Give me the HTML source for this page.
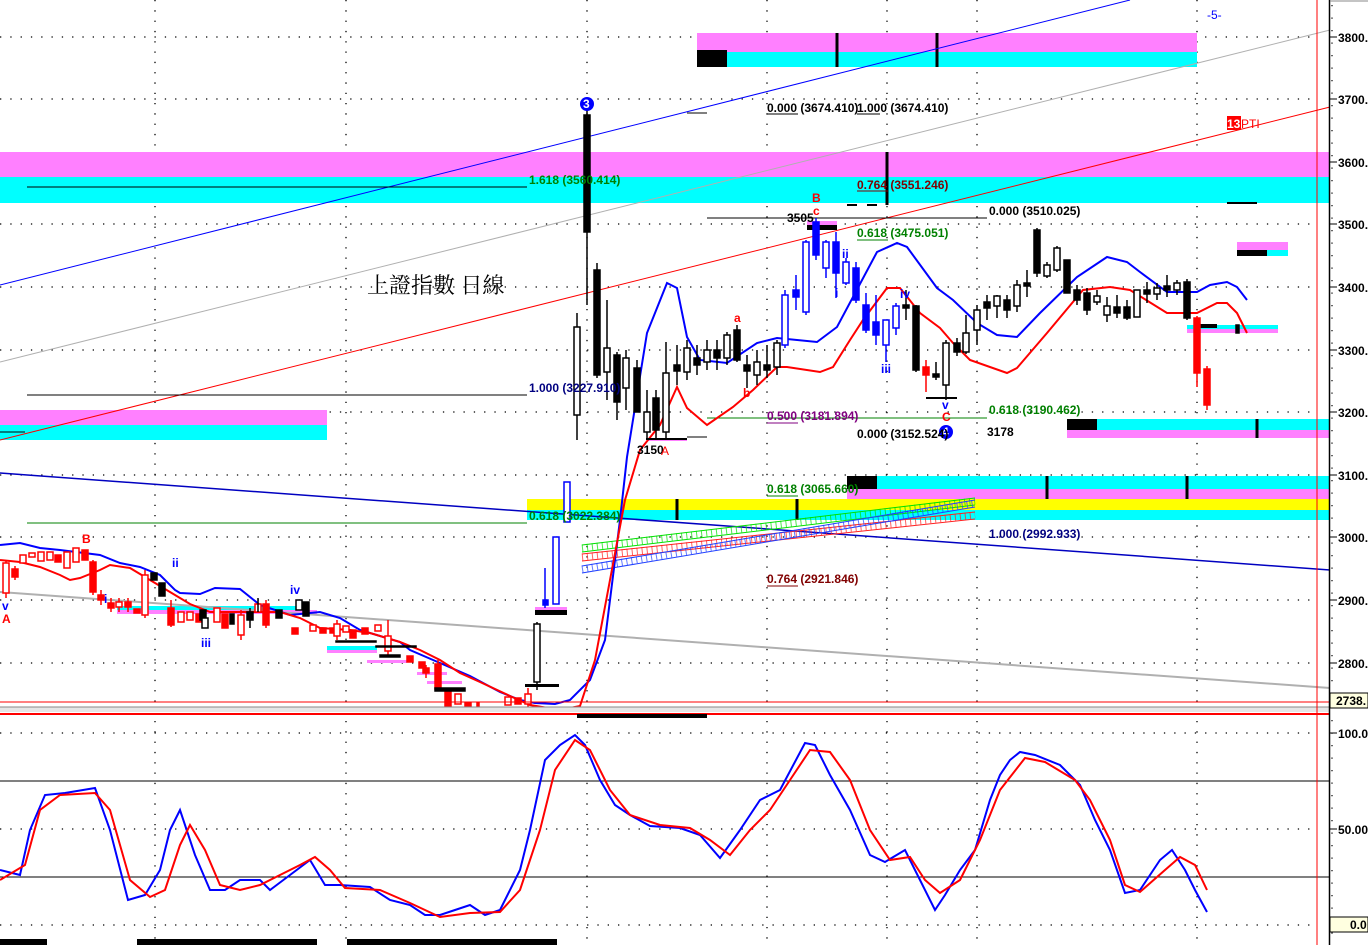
<!DOCTYPE html>
<html><head><meta charset="utf-8"><style>
html,body{margin:0;padding:0;background:#fff;width:1368px;height:945px;overflow:hidden}
svg{display:block}
text{font-family:"Liberation Sans",Arial,sans-serif;font-weight:bold;font-size:12px}
.ax{font-size:12px;fill:#000}
</style></head><body>
<svg width="1368" height="945" viewBox="0 0 1368 945" xmlns="http://www.w3.org/2000/svg">
<rect width="1368" height="945" fill="#fff"/>
<!-- dotted grid -->
<g stroke="#000" stroke-width="1.3" stroke-dasharray="1.3 9" fill="none">
<line x1="0" y1="37" x2="1316" y2="37"/><line x1="0" y1="99" x2="1316" y2="99"/>
<line x1="0" y1="162" x2="1316" y2="162"/><line x1="0" y1="224" x2="1316" y2="224"/>
<line x1="0" y1="287" x2="1316" y2="287"/><line x1="0" y1="350" x2="1316" y2="350"/>
<line x1="0" y1="412" x2="1316" y2="412"/><line x1="0" y1="475" x2="1316" y2="475"/>
<line x1="0" y1="537" x2="1316" y2="537"/><line x1="0" y1="600" x2="1316" y2="600"/>
<line x1="0" y1="663" x2="1316" y2="663"/>
<line x1="0" y1="733" x2="1316" y2="733"/><line x1="0" y1="829" x2="1316" y2="829"/>
<line x1="0" y1="925" x2="1316" y2="925"/>
<line x1="155" y1="0" x2="155" y2="945"/><line x1="346" y1="0" x2="346" y2="945"/>
<line x1="587" y1="0" x2="587" y2="945"/><line x1="767" y1="0" x2="767" y2="945"/>
<line x1="887" y1="0" x2="887" y2="945"/><line x1="977" y1="0" x2="977" y2="945"/>
<line x1="1197" y1="0" x2="1197" y2="945"/>
</g>
<!-- bands -->
<rect x="0" y="152" width="1330" height="25" fill="#ff80ff"/>
<rect x="0" y="177" width="1330" height="26" fill="#00ffff"/>
<rect x="697" y="33" width="500" height="19" fill="#ff80ff"/>
<rect x="697" y="52" width="500" height="15" fill="#00ffff"/>
<rect x="697" y="50" width="30" height="17" fill="#000"/>
<line x1="837" y1="33" x2="837" y2="67" stroke="#000" stroke-width="3"/>
<line x1="937" y1="33" x2="937" y2="67" stroke="#000" stroke-width="3"/>
<rect x="0" y="410" width="327" height="15" fill="#ff80ff"/>
<rect x="0" y="425" width="327" height="15" fill="#00ffff"/>
<rect x="1067" y="419" width="263" height="11" fill="#00ffff"/>
<rect x="1067" y="430" width="263" height="8" fill="#ff80ff"/>
<rect x="1067" y="419" width="30" height="11" fill="#000"/>
<line x1="1257" y1="419" x2="1257" y2="438" stroke="#000" stroke-width="3"/>
<rect x="847" y="476" width="483" height="13" fill="#00ffff"/>
<rect x="847" y="489" width="483" height="10" fill="#ff80ff"/>
<rect x="847" y="476" width="30" height="13" fill="#000"/>
<line x1="1047" y1="476" x2="1047" y2="499" stroke="#000" stroke-width="3"/>
<line x1="1187" y1="476" x2="1187" y2="499" stroke="#000" stroke-width="3"/>
<rect x="527" y="499" width="803" height="11" fill="#ffff00"/>
<rect x="527" y="510" width="803" height="10" fill="#00ffff"/>
<line x1="677" y1="499" x2="677" y2="520" stroke="#000" stroke-width="3"/>
<line x1="797" y1="499" x2="797" y2="520" stroke="#000" stroke-width="3"/>
<rect x="1237" y="242" width="51" height="8" fill="#ff80ff"/>
<rect x="1237" y="250" width="51" height="6" fill="#00ffff"/>
<rect x="1237" y="250" width="30" height="6" fill="#000"/>
<rect x="1187" y="325" width="91" height="4" fill="#00ffff"/>
<rect x="1187" y="329" width="91" height="4" fill="#ff80ff"/>
<rect x="1197" y="324" width="20" height="4" fill="#000"/>
<rect x="117" y="606" width="180" height="4" fill="#00ffff"/>
<rect x="117" y="610" width="200" height="4" fill="#ff80ff"/>
<rect x="327" y="646" width="50" height="4" fill="#00ffff"/>
<rect x="327" y="650" width="50" height="3" fill="#ff80ff"/>
<rect x="367" y="660" width="40" height="3" fill="#ff80ff"/>
<rect x="417" y="672" width="30" height="3" fill="#ff80ff"/>
<rect x="427" y="681" width="35" height="3" fill="#ff80ff"/>
<rect x="535" y="607" width="32" height="3" fill="#ff80ff"/>
<rect x="535" y="610" width="32" height="5" fill="#000"/>
<rect x="525" y="684" width="34" height="3" fill="#000"/>
<rect x="807" y="221" width="30" height="4" fill="#ff80ff"/>
<rect x="807" y="225" width="30" height="5" fill="#000"/>
<rect x="647" y="438" width="40" height="3" fill="#ff80ff"/>
<!-- trend lines -->
<g fill="none" stroke-width="1">
<line x1="0" y1="285" x2="1130" y2="0" stroke="#0000ff"/>
<line x1="0" y1="362" x2="1330" y2="30" stroke="#b0b0b0"/>
<line x1="0" y1="440" x2="1330" y2="107" stroke="#ff0000"/>
<line x1="0" y1="473" x2="1330" y2="570" stroke="#0000c0" stroke-width="1.5"/>
<line x1="0" y1="592" x2="1330" y2="688" stroke="#b0b0b0" stroke-width="2"/>
<line x1="27" y1="187" x2="527" y2="187" stroke="#000"/>
<line x1="27" y1="395" x2="527" y2="395" stroke="#000"/>
<line x1="27" y1="523" x2="527" y2="523" stroke="#008000"/>
<line x1="707" y1="218" x2="987" y2="218" stroke="#000"/>
<line x1="707" y1="418" x2="987" y2="418" stroke="#008000"/>
<line x1="687" y1="113" x2="707" y2="113" stroke="#000"/>
<line x1="847" y1="205" x2="857" y2="205" stroke="#000" stroke-width="2"/>
<line x1="867" y1="205" x2="877" y2="205" stroke="#000" stroke-width="2"/>
<line x1="887" y1="152" x2="887" y2="205" stroke="#000" stroke-width="3"/>
<line x1="1227" y1="203" x2="1257" y2="203" stroke="#000" stroke-width="2"/>
<line x1="0" y1="432" x2="25" y2="432" stroke="#000"/>
<line x1="687" y1="437" x2="707" y2="437" stroke="#000"/>
</g>
<!-- crosshatch -->
<g fill="none" stroke-width="1">
<line x1="582" y1="545" x2="975" y2="498" stroke="#00e000"/><line x1="582" y1="552" x2="975" y2="505" stroke="#00e000"/>
<line x1="582" y1="548" x2="975" y2="501" stroke="#00e000" stroke-width="7" stroke-dasharray="1 4" opacity="0.7"/>
<line x1="582" y1="554" x2="975" y2="512" stroke="#ff2020"/><line x1="582" y1="561" x2="975" y2="519" stroke="#ff2020"/>
<line x1="582" y1="557" x2="975" y2="515" stroke="#ff2020" stroke-width="7" stroke-dasharray="1 4" opacity="0.7"/>
<line x1="582" y1="566" x2="975" y2="500" stroke="#2040ff"/><line x1="582" y1="573" x2="975" y2="507" stroke="#2040ff"/>
<line x1="582" y1="569" x2="975" y2="503" stroke="#2040ff" stroke-width="7" stroke-dasharray="1 4" opacity="0.7"/>
</g>
<!-- moving averages -->
<polyline fill="none" stroke="#0000ff" stroke-width="2" points="0,545 20,543 40,548 60,550 100,555 120,563 140,567 160,575 175,590 180,593 200,594 215,588 240,589 260,605 290,615 320,612 340,618 360,630 380,636 400,642 410,650 440,663 470,676 500,692 520,700 535,703 555,704 570,700 590,680 605,640 620,520 627,457 647,333 667,283 677,288 687,337 700,360 727,363 757,343 777,338 817,342 837,327 853,297 877,252 897,243 907,247 937,288 953,300 977,323 997,335 1017,337 1040,313 1077,277 1107,257 1127,262 1140,272 1167,292 1197,292 1210,285 1227,282 1237,287 1247,300"/>
<polyline fill="none" stroke="#ff0000" stroke-width="2" points="0,560 20,562 40,567 60,575 70,580 80,578 100,570 110,565 130,568 150,580 170,592 190,604 210,612 260,612 280,612 300,618 320,628 350,630 370,633 400,642 420,650 440,660 460,673 480,682 510,696 530,705 560,710 580,706 595,660 610,580 625,500 640,450 660,425 677,387 687,408 707,425 733,407 753,390 777,367 787,367 820,372 833,367 850,340 863,320 887,288 900,288 920,313 940,328 953,343 970,360 1007,373 1017,368 1047,333 1083,290 1110,287 1130,290 1167,313 1197,313 1217,303 1227,303 1237,313 1247,333"/>
<!-- candles -->
<g stroke-width="1.5">
<!-- left red -->
<g stroke="#ff0000" fill="#ff0000">
<line x1="6" y1="560" x2="6" y2="598"/><rect x="3" y="563" width="6" height="30" fill="#fff"/>
<line x1="15" y1="566" x2="15" y2="580"/><rect x="12" y="569" width="6" height="8"/>
<rect x="20" y="555" width="6" height="8" fill="#fff"/><rect x="29" y="553" width="6" height="4" fill="#fff"/>
<rect x="38" y="552" width="6" height="9" fill="#fff"/><rect x="47" y="552" width="6" height="8" fill="#fff"/>
<rect x="55" y="555" width="6" height="7"/><rect x="64" y="552" width="6" height="16" fill="#fff"/>
<rect x="73" y="548" width="6" height="14" fill="#fff"/><rect x="82" y="550" width="6" height="10"/>
<line x1="93" y1="560" x2="93" y2="595"/><rect x="90" y="562" width="6" height="30"/>
<line x1="101" y1="590" x2="101" y2="605"/><rect x="98" y="595" width="6" height="5"/>
<line x1="111" y1="598" x2="111" y2="612"/><rect x="108" y="603" width="6" height="5"/>
<line x1="119" y1="598" x2="119" y2="612"/><rect x="116" y="602" width="6" height="5" fill="#fff"/>
<line x1="128" y1="598" x2="128" y2="612"/><rect x="125" y="602" width="6" height="5"/>
<rect x="134" y="609" width="6" height="4"/>
<line x1="145" y1="570" x2="145" y2="618"/><rect x="142" y="575" width="6" height="40" fill="#fff"/>
<line x1="171" y1="600" x2="171" y2="627"/><rect x="168" y="608" width="6" height="17"/>
<rect x="178" y="612" width="6" height="10" fill="#fff"/><rect x="187" y="612" width="6" height="8" fill="#fff"/>
<rect x="196" y="614" width="6" height="8"/><rect x="214" y="608" width="6" height="14" fill="#fff"/>
<rect x="222" y="614" width="6" height="14"/><line x1="241" y1="610" x2="241" y2="640"/><rect x="238" y="615" width="6" height="20" fill="#fff"/>
<rect x="255" y="604" width="6" height="8" fill="#fff"/><line x1="266" y1="600" x2="266" y2="628"/><rect x="263" y="604" width="6" height="21"/>
<rect x="292" y="628" width="6" height="6"/><rect x="310" y="625" width="6" height="6" fill="#fff"/>
<rect x="320" y="628" width="6" height="5"/><rect x="330" y="628" width="6" height="5"/>
<line x1="337" y1="620" x2="337" y2="640"/><rect x="334" y="624" width="6" height="12" fill="#fff"/>
<rect x="350" y="630" width="6" height="8"/>
<line x1="388" y1="620" x2="388" y2="655"/><rect x="385" y="636" width="6" height="15" fill="#fff"/>
<rect x="343" y="626" width="6" height="6" fill="#fff"/><rect x="362" y="628" width="6" height="6"/>
<rect x="375" y="625" width="6" height="6" fill="#fff"/>
<rect x="407" y="656" width="6" height="6"/><rect x="419" y="662" width="6" height="6"/>
<line x1="426" y1="665" x2="426" y2="678"/><rect x="423" y="668" width="6" height="5"/>
<line x1="438" y1="660" x2="438" y2="690"/><rect x="435" y="664" width="6" height="25"/>
<rect x="445" y="692" width="6" height="14"/><rect x="455" y="694" width="6" height="10" fill="#fff"/>
<rect x="465" y="703" width="6" height="4"/><rect x="477" y="703" width="2" height="4"/>
<rect x="505" y="697" width="6" height="8" fill="#fff"/><rect x="515" y="698" width="6" height="6"/>
<line x1="528" y1="688" x2="528" y2="708"/><rect x="525" y="694" width="6" height="10" fill="#fff"/>
</g>
<!-- left black -->
<g stroke="#000" fill="#000">
<rect x="151" y="573" width="6" height="7"/><rect x="159" y="583" width="6" height="13"/>
<rect x="200" y="610" width="6" height="10"/>
<rect x="202" y="618" width="6" height="10" fill="#fff"/>
<rect x="230" y="614" width="4" height="10"/><line x1="250" y1="608" x2="250" y2="628"/><rect x="247" y="612" width="6" height="8"/>
<rect x="276" y="610" width="6" height="8"/><line x1="258" y1="598" x2="258" y2="612"/>
<rect x="303" y="602" width="6" height="14"/>
<rect x="296" y="600" width="6" height="10" fill="#fff"/>
<rect x="336" y="641" width="40" height="1"/><rect x="376" y="646" width="40" height="1"/>
<rect x="380" y="655" width="20" height="2"/><rect x="435" y="688" width="30" height="3"/>
<line x1="537" y1="622" x2="537" y2="690"/><rect x="534" y="624" width="6" height="58" fill="#fff"/>
</g>
<!-- blue early -->
<g stroke="#0000ff" fill="#0000ff">
<line x1="545" y1="568" x2="545" y2="608"/><rect x="543" y="600" width="5" height="5"/>
<rect x="553" y="537" width="6" height="67" fill="#fff"/>
<rect x="564" y="482" width="6" height="40" fill="#fff"/>
</g>
<!-- middle black -->
<g stroke="#000" fill="#000">
<line x1="587" y1="110" x2="587" y2="305"/><rect x="584" y="115" width="6" height="117"/>
<line x1="577" y1="313" x2="577" y2="440"/><rect x="574" y="327" width="6" height="88" fill="#fff"/>
<line x1="597" y1="263" x2="597" y2="378"/><rect x="594" y="270" width="6" height="105"/>
<line x1="607" y1="300" x2="607" y2="400"/><rect x="604" y="348" width="6" height="24" fill="#fff"/>
<line x1="617" y1="352" x2="617" y2="420"/><rect x="614" y="355" width="6" height="47"/>
<line x1="626" y1="350" x2="626" y2="410"/><rect x="623" y="358" width="6" height="30" fill="#fff"/>
<line x1="637" y1="360" x2="637" y2="412"/><rect x="634" y="368" width="6" height="44"/>
<line x1="647" y1="390" x2="647" y2="440"/><rect x="644" y="412" width="6" height="20" fill="#fff"/>
<line x1="656" y1="390" x2="656" y2="440"/><rect x="653" y="398" width="6" height="32"/>
<line x1="666" y1="342" x2="666" y2="440"/><rect x="663" y="373" width="6" height="59" fill="#fff"/>
<line x1="677" y1="345" x2="677" y2="385"/><rect x="674" y="365" width="6" height="6"/>
<line x1="687" y1="340" x2="687" y2="380"/><rect x="684" y="348" width="6" height="24" fill="#fff"/>
<line x1="697" y1="345" x2="697" y2="375"/><rect x="694" y="358" width="6" height="7"/>
<line x1="707" y1="340" x2="707" y2="370"/><rect x="704" y="350" width="6" height="12" fill="#fff"/>
<line x1="717" y1="340" x2="717" y2="370"/><rect x="714" y="350" width="6" height="8"/>
<line x1="727" y1="332" x2="727" y2="365"/><rect x="724" y="335" width="6" height="23" fill="#fff"/>
<line x1="737" y1="325" x2="737" y2="362"/><rect x="734" y="330" width="6" height="30"/>
<line x1="747" y1="355" x2="747" y2="388"/><rect x="744" y="365" width="6" height="6"/>
<line x1="757" y1="350" x2="757" y2="385"/><rect x="754" y="362" width="6" height="13" fill="#fff"/>
<line x1="767" y1="345" x2="767" y2="378"/><rect x="764" y="365" width="6" height="5"/>
<line x1="777" y1="340" x2="777" y2="375"/><rect x="774" y="343" width="6" height="24" fill="#fff"/>
<line x1="906" y1="290" x2="906" y2="320"/><rect x="903" y="305" width="6" height="3"/>
<line x1="916" y1="305" x2="916" y2="372"/><rect x="913" y="306" width="6" height="64"/>
<line x1="936" y1="362" x2="936" y2="380"/><rect x="933" y="374" width="6" height="3"/>
<line x1="946" y1="340" x2="946" y2="400"/><rect x="943" y="343" width="6" height="42" fill="#fff"/>
<line x1="957" y1="338" x2="957" y2="356"/><rect x="954" y="343" width="6" height="9"/>
<line x1="966" y1="315" x2="966" y2="354"/><rect x="963" y="333" width="6" height="19" fill="#fff"/>
<line x1="977" y1="305" x2="977" y2="345"/><rect x="974" y="310" width="6" height="20" fill="#fff"/>
<line x1="987" y1="295" x2="987" y2="320"/><rect x="984" y="302" width="6" height="6"/>
<line x1="997" y1="295" x2="997" y2="318"/><rect x="994" y="296" width="6" height="10" fill="#fff"/>
<line x1="1007" y1="295" x2="1007" y2="318"/><rect x="1004" y="300" width="6" height="10"/>
<line x1="1017" y1="280" x2="1017" y2="312"/><rect x="1014" y="285" width="6" height="21" fill="#fff"/>
<line x1="1027" y1="270" x2="1027" y2="297"/><rect x="1024" y="283" width="6" height="3"/>
<line x1="1037" y1="228" x2="1037" y2="277"/><rect x="1034" y="230" width="6" height="43"/>
<line x1="1047" y1="262" x2="1047" y2="278"/><rect x="1044" y="265" width="6" height="11" fill="#fff"/>
<line x1="1057" y1="246" x2="1057" y2="272"/><rect x="1054" y="248" width="6" height="22" fill="#fff"/>
<rect x="1064" y="260" width="6" height="33"/>
<line x1="1077" y1="285" x2="1077" y2="305"/><rect x="1074" y="290" width="6" height="10"/>
<line x1="1087" y1="288" x2="1087" y2="315"/><rect x="1084" y="293" width="6" height="17"/>
<line x1="1097" y1="290" x2="1097" y2="305"/><rect x="1094" y="296" width="6" height="6" fill="#fff"/>
<line x1="1107" y1="297" x2="1107" y2="322"/><rect x="1104" y="306" width="6" height="9" fill="#fff"/>
<line x1="1117" y1="295" x2="1117" y2="318"/><rect x="1114" y="307" width="6" height="6"/>
<line x1="1127" y1="300" x2="1127" y2="320"/><rect x="1124" y="307" width="6" height="11"/>
<rect x="1134" y="290" width="6" height="27" fill="#fff"/>
<line x1="1147" y1="282" x2="1147" y2="303"/><rect x="1144" y="290" width="6" height="4"/>
<line x1="1157" y1="283" x2="1157" y2="300"/><rect x="1154" y="288" width="6" height="6" fill="#fff"/>
<line x1="1167" y1="275" x2="1167" y2="297"/><rect x="1164" y="286" width="6" height="4"/>
<line x1="1177" y1="280" x2="1177" y2="295"/><rect x="1174" y="283" width="6" height="7" fill="#fff"/>
<line x1="1187" y1="279" x2="1187" y2="320"/><rect x="1184" y="282" width="6" height="36"/>
<rect x="1236" y="325" width="3" height="8"/>
</g>
<!-- blue middle -->
<g stroke="#0000ff" fill="#0000ff">
<line x1="785" y1="290" x2="785" y2="348"/><rect x="782" y="295" width="6" height="50" fill="#fff"/>
<line x1="796" y1="275" x2="796" y2="310"/><rect x="793" y="290" width="6" height="7"/>
<line x1="806" y1="240" x2="806" y2="315"/><rect x="803" y="242" width="6" height="70" fill="#fff"/>
<line x1="816" y1="218" x2="816" y2="260"/><rect x="813" y="222" width="6" height="33"/>
<line x1="826" y1="240" x2="826" y2="278"/><rect x="823" y="242" width="6" height="26" fill="#fff"/>
<line x1="836" y1="232" x2="836" y2="298"/><rect x="833" y="242" width="6" height="31"/>
<line x1="846" y1="258" x2="846" y2="285"/><rect x="843" y="262" width="6" height="21" fill="#fff"/>
<line x1="856" y1="262" x2="856" y2="303"/><rect x="853" y="268" width="6" height="32"/>
<line x1="866" y1="293" x2="866" y2="333"/><rect x="863" y="305" width="6" height="25"/>
<line x1="876" y1="295" x2="876" y2="345"/><rect x="873" y="322" width="6" height="13"/>
<line x1="886" y1="320" x2="886" y2="362"/><rect x="883" y="320" width="6" height="25" fill="#fff"/>
<line x1="896" y1="303" x2="896" y2="335"/><rect x="893" y="306" width="6" height="22" fill="#fff"/>
</g>
<g stroke="#ff0000" fill="#ff0000">
<line x1="926" y1="360" x2="926" y2="392"/><rect x="923" y="367" width="6" height="8"/>
<line x1="1197" y1="316" x2="1197" y2="387"/><rect x="1194" y="318" width="6" height="55"/>
<line x1="1207" y1="366" x2="1207" y2="410"/><rect x="1204" y="369" width="6" height="36"/>
</g>
<rect x="926" y="397" width="31" height="2" fill="#000"/>
<rect x="646" y="438" width="41" height="2" fill="#000"/>
</g>
<!-- labels -->
<circle cx="587" cy="104" r="7" fill="#0000ff"/><text x="583" y="108" fill="#fff" font-size="11">3</text>
<circle cx="946" cy="432" r="7" fill="#0000ff"/><text x="942" y="436" fill="#fff" font-size="11">4</text>
<text x="767" y="112" fill="#000">0.000 (3674.410)</text>
<line x1="767" y1="114" x2="798" y2="114" stroke="#000"/>
<text x="857" y="112" fill="#000" stroke="#fff" stroke-width="0">1.000 (3674.410)</text>
<line x1="857" y1="114" x2="880" y2="114" stroke="#000"/>
<text x="529" y="184" fill="#008000">1.618 (3560.414)</text>
<text x="857" y="189" fill="#800000">0.764 (3551.246)</text>
<line x1="857" y1="191" x2="888" y2="191" stroke="#800000"/>
<text x="989" y="215" fill="#000">0.000 (3510.025)</text>
<text x="787" y="222" fill="#000">3505</text>
<text x="857" y="237" fill="#008000">0.618 (3475.051)</text>
<line x1="857" y1="240" x2="888" y2="240" stroke="#008000"/>
<text x="367" y="293" fill="#000" style="font-family:'Liberation Serif','Noto Serif CJK SC',serif;font-weight:normal;font-size:22px">上證指數 日線</text>
<text x="529" y="392" fill="#000080">1.000 (3227.910)</text>
<text x="767" y="420" fill="#800080">0.500 (3181.894)</text>
<line x1="767" y1="423" x2="798" y2="423" stroke="#800080"/>
<text x="989" y="414" fill="#008000">0.618 (3190.462)</text>
<text x="857" y="438" fill="#000">0.000 (3152.524)</text>
<text x="987" y="436" fill="#000">3178</text>
<text x="637" y="454" fill="#000">3150</text>
<text x="661" y="455" fill="#ff0000" style="font-weight:normal">A</text>
<text x="767" y="493" fill="#008000">0.618 (3065.660)</text>
<line x1="767" y1="496" x2="798" y2="496" stroke="#008000"/>
<text x="529" y="520" fill="#008000">0.618 (3022.384)</text>
<text x="989" y="538" fill="#000080">1.000 (2992.933)</text>
<text x="767" y="583" fill="#800000">0.764 (2921.846)</text>
<line x1="767" y1="586" x2="798" y2="586" stroke="#800000"/>
<g style="font-weight:normal" font-size="12">
<text x="812" y="202" fill="#ff0000">B</text><text x="813" y="215" fill="#ff0000">c</text>
<text x="734" y="322" fill="#ff0000">a</text><text x="743" y="397" fill="#ff0000">b</text>
<text x="842" y="258" fill="#0000ff">ii</text><text x="835" y="297" fill="#0000ff">i</text>
<text x="881" y="373" fill="#0000ff">iii</text><text x="900" y="298" fill="#0000ff">iv</text>
<text x="942" y="409" fill="#0000ff">v</text><text x="942" y="421" fill="#ff0000">C</text>
<text x="2" y="610" fill="#0000ff">v</text><text x="2" y="623" fill="#ff0000">A</text>
<text x="82" y="543" fill="#ff0000">B</text><text x="104" y="603" fill="#0000ff">i</text>
<text x="172" y="567" fill="#0000ff">ii</text><text x="201" y="647" fill="#0000ff">iii</text>
<text x="290" y="594" fill="#0000ff">iv</text>
</g>
<text x="1207" y="19" fill="#0000ff" style="font-weight:normal" font-size="11">-5-</text>
<rect x="1227" y="116" width="14" height="14" fill="#ff0000"/>
<text x="1227" y="128" fill="#fff">13</text><text x="1241" y="128" fill="#ff0000" style="font-weight:normal">PTI</text>
<!-- divider -->
<line x1="0" y1="702" x2="1330" y2="702" stroke="#ff0000"/>
<rect x="0" y="707" width="1368" height="5" fill="#e6e6e6"/>
<line x1="0" y1="707" x2="1368" y2="707" stroke="#888"/>
<line x1="0" y1="714" x2="1330" y2="714" stroke="#ff0000" stroke-width="2"/>
<rect x="577" y="714" width="130" height="4" fill="#000"/>
<!-- oscillator -->
<line x1="0" y1="781" x2="1330" y2="781" stroke="#000"/>
<line x1="0" y1="877" x2="1330" y2="877" stroke="#000"/>
<polyline fill="none" stroke="#0000ff" stroke-width="2" points="0,870 20,875 30,830 45,795 65,793 95,788 110,830 128,900 145,895 160,870 170,830 180,810 195,855 210,890 225,890 240,880 260,880 270,890 290,875 310,860 325,885 340,885 370,887 390,900 410,905 425,915 440,915 455,910 470,905 485,915 500,910 520,870 530,830 545,760 560,745 575,735 585,745 600,780 615,805 630,815 650,826 680,828 700,835 720,858 740,830 760,800 780,790 805,743 815,745 830,775 850,810 870,855 885,862 905,850 920,880 935,910 945,895 960,870 975,850 990,800 1000,775 1010,760 1020,752 1035,755 1060,765 1080,785 1095,820 1110,850 1125,893 1140,890 1160,860 1172,850 1185,870 1195,890 1207,912"/>
<polyline fill="none" stroke="#ff0000" stroke-width="2" points="0,880 25,865 40,810 60,795 95,793 110,810 130,880 150,897 165,890 180,845 190,825 205,850 220,885 240,890 260,885 280,875 300,865 315,857 330,870 345,888 380,890 410,903 440,917 470,913 500,912 520,890 540,830 555,770 575,740 590,750 610,790 630,815 660,825 690,828 710,840 730,855 750,830 770,810 790,780 810,750 830,752 850,780 870,830 890,860 910,857 925,880 940,893 960,880 980,840 1000,790 1025,758 1045,762 1075,780 1090,800 1110,840 1125,885 1140,892 1165,870 1180,857 1195,865 1207,890"/>
<rect x="0" y="939" width="47" height="6" fill="#000"/>
<rect x="137" y="939" width="180" height="6" fill="#000"/>
<rect x="347" y="939" width="210" height="6" fill="#000"/>
<!-- right axis -->
<line x1="1317" y1="0" x2="1317" y2="945" stroke="#ff0000"/>
<rect x="1330" y="0" width="38" height="945" fill="#fff"/>
<line x1="1329.5" y1="0" x2="1329.5" y2="945" stroke="#000" stroke-width="1.5"/>
<line x1="1330" y1="1" x2="1368" y2="1" stroke="#888"/>
<g stroke="#000" stroke-width="1.2" stroke-dasharray="1.3 11.2"><line x1="1332" y1="5" x2="1332" y2="700"/><line x1="1332" y1="720" x2="1332" y2="945"/></g>
<g stroke="#000">
<line x1="1330" y1="37" x2="1337" y2="37"/><line x1="1330" y1="99" x2="1337" y2="99"/><line x1="1330" y1="162" x2="1337" y2="162"/><line x1="1330" y1="224" x2="1337" y2="224"/><line x1="1330" y1="287" x2="1337" y2="287"/><line x1="1330" y1="350" x2="1337" y2="350"/><line x1="1330" y1="412" x2="1337" y2="412"/><line x1="1330" y1="475" x2="1337" y2="475"/><line x1="1330" y1="537" x2="1337" y2="537"/><line x1="1330" y1="600" x2="1337" y2="600"/><line x1="1330" y1="663" x2="1337" y2="663"/><line x1="1330" y1="733" x2="1337" y2="733"/><line x1="1330" y1="829" x2="1337" y2="829"/>
</g>
<g class="ax">
<text x="1338" y="42">3800.</text><text x="1338" y="104">3700.</text><text x="1338" y="167">3600.</text><text x="1338" y="229">3500.</text><text x="1338" y="292">3400.</text><text x="1338" y="355">3300.</text><text x="1338" y="417">3200.</text><text x="1338" y="480">3100.</text><text x="1338" y="542">3000.</text><text x="1338" y="605">2900.</text><text x="1338" y="668">2800.</text>
<text x="1338" y="738">100.0</text><text x="1338" y="834">50.00</text>
</g>
<rect x="1330" y="693" width="38" height="15" fill="#ffffe0" stroke="#000"/>
<text x="1336" y="705" class="ax">2738.</text>
<rect x="1330" y="917" width="38" height="15" fill="#ffffe0" stroke="#000"/>
<text x="1350" y="929" class="ax">0.0</text>
</svg>
</body></html>
